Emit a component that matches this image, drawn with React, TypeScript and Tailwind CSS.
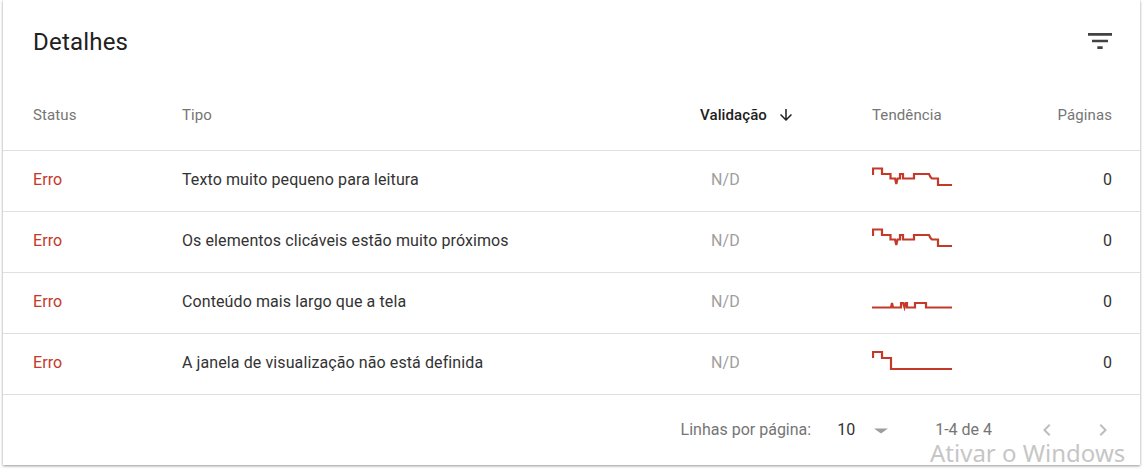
import React from "react"

type Row = {
    tipo: string
    trend: string
}

const rows: Row[] = [
    {
        tipo: "Texto muito pequeno para leitura",
        trend: "M1 8 V1.5 H10 V7 H18.5 V11.5 H23 L24.3 17 L25.5 11.5 H28 V7 H31 V11.5 H42 V7 H57 L58.5 10 L60 11.5 H66 V18 H80",
    },
    {
        tipo: "Os elementos clicáveis estão muito próximos",
        trend: "M1 8 V1.5 H10 V7 H18.5 V11.5 H23 L24.3 17 L25.5 11.5 H28 V7 H31 V11.5 H42 V7 H57 L58.5 10 L60 11.5 H66 V18 H80",
    },
    {
        tipo: "Conteúdo mais largo que a tela",
        trend: "M0 18.5 H19 L20 14 L21 18.5 H29 V14 H31 L32.5 18.5 L33.5 14 H35 V18.5 H43 V14 H54 V18.5 H80",
    },
    {
        tipo: "A janela de visualização não está definida",
        trend: "M1 8 V2 H10 V8 H19 V19 H80",
    },
]

const Sparkline = ({ d }: { d: string }) => (
    <svg width="82" height="26" viewBox="0 0 82 26" fill="none" className="mb-[2px]">
        <path d={d} stroke="#c53929" strokeWidth="2.2" strokeLinejoin="miter" />
    </svg>
)

const App = () => {
    return (
        <div className="relative w-[1147px] h-[470px] bg-white pl-[3px] pr-[7px] pb-[5px] font-['Roboto',sans-serif]">
            <div className="h-full bg-white shadow-[0_1px_3px_rgba(0,0,0,0.25),0_1px_2px_rgba(0,0,0,0.2)] flex flex-col">
                {/* title */}
                <div className="h-[84px] flex items-center justify-between pl-[30px] pr-[24px]">
                    <h2 className="text-[24px] tracking-[0.2px] text-[#212121] pb-[1px]">Detalhes</h2>
                    <svg width="32" height="32" viewBox="0 0 24 24" className="mb-[2px] fill-[#424242]">
                        <path d="M10 18h4v-2h-4v2zM3 6v2h18V6H3zm3 7h12v-2H6v2z" />
                    </svg>
                </div>

                {/* header */}
                <div className="h-[66px] pb-[4px] grid grid-cols-[149px_518px_172px_1fr_120px] items-center pl-[30px] pr-[28px] text-[15px] tracking-[0.1px] text-[#757575]">
                    <div>Status</div>
                    <div>Tipo</div>
                    <div className="flex items-center gap-[10px] text-[#212121] font-medium">
                        Validação
                        <svg width="18" height="18" viewBox="0 0 24 24" className="fill-[#212121]">
                            <path d="M20 12l-1.41-1.41L13 16.17V4h-2v12.17l-5.58-5.59L4 12l8 8 8-8z" />
                        </svg>
                    </div>
                    <div>Tendência</div>
                    <div className="text-right">Páginas</div>
                </div>

                {/* rows */}
                {rows.map((row, i) => (
                    <div
                        key={i}
                        className="h-[61px] border-t border-[#e0e0e0] grid grid-cols-[149px_518px_172px_1fr_120px] items-center pl-[30px] pr-[28px] text-[16px] tracking-[0.1px] pb-[2px]"
                    >
                        <div className="text-[#c53929]">Erro</div>
                        <div className="text-[#333333]">{row.tipo}</div>
                        <div className="pl-[11px] text-[#9e9e9e]">N/D</div>
                        <div className="flex items-center pt-[2px]">
                            <Sparkline d={row.trend} />
                        </div>
                        <div className="text-right text-[#333333]">0</div>
                    </div>
                ))}

                {/* footer */}
                <div className="flex-1 border-t border-[#e0e0e0] flex items-center justify-end pr-[25px] text-[16px] text-[#757575]">
                    <span>Linhas por página:</span>
                    <span className="ml-[26px] text-[#333333]">10</span>
                    <svg width="16" height="24" viewBox="0 0 16 24" className="ml-[18px] fill-[#9e9e9e]">
                        <path d="M1 10.5L8 15.5L15 10.5z" />
                    </svg>
                    <span className="ml-[46px]">1-4 de 4</span>
                    <svg width="24" height="24" viewBox="0 0 24 24" className="ml-[43px] fill-[#bdbdbd]">
                        <path d="M15.41 7.41L14 6l-6 6 6 6 1.41-1.41L10.83 12z" />
                    </svg>
                    <svg width="24" height="24" viewBox="0 0 24 24" className="ml-[32px] fill-[#bdbdbd]">
                        <path d="M10 6L8.59 7.41 13.17 12l-4.58 4.59L10 18l6-6z" />
                    </svg>
                </div>
            </div>

            {/* windows activation watermark */}
            <div className="absolute left-[930px] top-[441px] text-[24px] leading-none text-[#c6c6c6] font-['Noto_Sans',sans-serif]">
                Ativar o Windows
            </div>
        </div>
    )
}

export default App
